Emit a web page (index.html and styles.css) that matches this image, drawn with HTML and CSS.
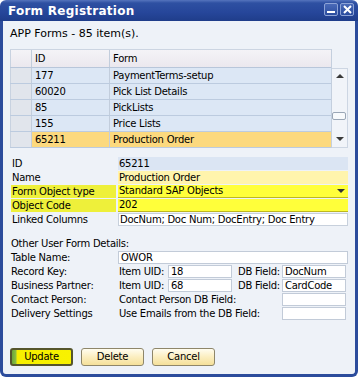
FILE: index.html
```html
<!DOCTYPE html>
<html>
<head>
<meta charset="utf-8">
<link rel="stylesheet" href="styles.css">
</head>
<body>
<div class="win">
  <div class="titlebar">
    <span class="title">Form Registration</span>
    <div class="tbtns">
      <span class="tb tb-min"><span class="minbar"></span></span>
      <span class="tb tb-close">
        <svg width="9" height="9" viewBox="0 0 9 9"><path d="M1 1 L8 8 M8 1 L1 8" stroke="#fff" stroke-width="2"/></svg>
      </span>
    </div>
  </div>
  <div class="body">
    <div class="count">APP Forms - 85 item(s).</div>
    <div class="gridwrap">
      <div class="grid">
        <div class="row head">
          <div class="c rh"></div>
          <div class="c cid">ID</div>
          <div class="c cform">Form</div>
        </div>
        <div class="row">
          <div class="c rh"></div>
          <div class="c cid">177</div>
          <div class="c cform">PaymentTerms-setup</div>
        </div>
        <div class="row">
          <div class="c rh"></div>
          <div class="c cid">60020</div>
          <div class="c cform">Pick List Details</div>
        </div>
        <div class="row">
          <div class="c rh"></div>
          <div class="c cid">85</div>
          <div class="c cform">PickLists</div>
        </div>
        <div class="row">
          <div class="c rh"></div>
          <div class="c cid">155</div>
          <div class="c cform">Price Lists</div>
        </div>
        <div class="row sel">
          <div class="c rh"></div>
          <div class="c cid">65211</div>
          <div class="c cform">Production Order</div>
        </div>
      </div>
      <div class="scroll">
        <span class="arrow up"></span>
        <span class="thumb"></span>
        <span class="arrow down"></span>
      </div>
    </div>

    <div class="details">
      <div class="drow">
        <div class="lbl">ID</div>
        <div class="val v-id">65211</div>
      </div>
      <div class="drow">
        <div class="lbl">Name</div>
        <div class="val v-name">Production Order</div>
      </div>
      <div class="drow">
        <div class="lbl hl">Form Object type</div>
        <div class="val v-yel v-combo">Standard SAP Objects<span class="caret"></span></div>
      </div>
      <div class="drow">
        <div class="lbl hl">Object Code</div>
        <div class="val v-yel">202</div>
      </div>
      <div class="drow">
        <div class="lbl">Linked Columns</div>
        <div class="val v-white">DocNum; Doc Num; DocEntry; Doc Entry</div>
      </div>
    </div>

    <div class="other-title">Other User Form Details:</div>
    <div class="other">
      <div class="orow">
        <div class="lbl">Table Name:</div>
        <div class="box full">OWOR</div>
      </div>
      <div class="orow">
        <div class="lbl">Record Key:</div>
        <div class="txt t-uid">Item UID:</div>
        <div class="box uid">18</div>
        <div class="txt t-db">DB Field:</div>
        <div class="box db">DocNum</div>
      </div>
      <div class="orow">
        <div class="lbl">Business Partner:</div>
        <div class="txt t-uid">Item UID:</div>
        <div class="box uid">68</div>
        <div class="txt t-db">DB Field:</div>
        <div class="box db">CardCode</div>
      </div>
      <div class="orow">
        <div class="lbl">Contact Person:</div>
        <div class="txt t-long">Contact Person DB Field:</div>
        <div class="box db"></div>
      </div>
      <div class="orow">
        <div class="lbl">Delivery Settings</div>
        <div class="txt t-long">Use Emails from the DB Field:</div>
        <div class="box db"></div>
      </div>
    </div>

    <div class="buttons">
      <div class="btn btn-primary">Update</div>
      <div class="btn">Delete</div>
      <div class="btn">Cancel</div>
    </div>
  </div>
</div>
</body>
</html>
```

FILE: styles.css
```css
* { box-sizing: border-box; }
html, body { margin: 0; padding: 0; background: #ffffff; }
body {
  font-family: "DejaVu Sans", Verdana, sans-serif;
  font-size: 10px;
  letter-spacing: -0.25px;
  color: #000;
}
.win {
  width: 358px;
  height: 377px;
  display: flex;
  flex-direction: column;
}
.titlebar {
  height: 21px;
  flex: none;
  background: linear-gradient(#5574bd 0, #2e50a2 3px, #26469a 60%, #1f3d8a 100%);
  border-radius: 6px 6px 0 0;
  display: flex;
  align-items: center;
  justify-content: space-between;
  padding: 0 4px 0 8px;
}
.title {
  color: #fff;
  font-weight: bold;
  font-size: 12px;
  letter-spacing: 0.25px;
}
.tbtns { display: flex; gap: 2px; margin-top: -3px; }
.tb {
  width: 14px;
  height: 13px;
  border: 1px solid #8da3d6;
  border-radius: 2px;
  background: linear-gradient(#4a6ab8, #2a4c9e);
  display: flex;
  align-items: center;
  justify-content: center;
  position: relative;
}
.minbar {
  position: absolute;
  left: 2px;
  right: 2px;
  bottom: 2px;
  height: 2px;
  background: #fff;
}
.body {
  flex: 1;
  background: #eef2f8;
  border-left: 3px solid #2c4c9c;
  border-right: 3px solid #2c4c9c;
  border-bottom: 3px solid #2c4c9c;
  border-radius: 0 0 6px 6px;
  padding: 0 7px;
  display: flex;
  flex-direction: column;
}
.count {
  margin-top: 6px;
  height: 14px;
  line-height: 14px;
  font-size: 11px;
  letter-spacing: 0;
}
.gridwrap {
  margin-top: 8px;
  display: flex;
  align-items: flex-start;
}
.grid {
  width: 322px;
  border-right: 1px solid #c4cfde;
}
.row {
  display: flex;
  height: 16px;
  border-bottom: 1px solid #bccbdf;
  background: #dce7f5;
}
.row.head {
  height: 19px;
  border-top: 1px solid #ccd5e2;
  background: linear-gradient(#f4f3f7, #ebe8ee);
  border-bottom: 1px solid #b8c6da;
}
.c {
  line-height: 15px;
  white-space: nowrap;
  overflow: hidden;
}
.head .c { line-height: 17px; }
.rh {
  width: 22px;
  background: #e1e5ec;
  border-right: 1px solid #c2cddc;
  border-left: 1px solid #c8d2e0;
}
.head .rh { background: transparent; }
.cid {
  width: 78px;
  padding-left: 3px;
  border-right: 1px solid #c2cddc;
}
.cform {
  flex: 1;
  padding-left: 3px;
}
.row.sel .cid, .row.sel .cform { background: #fcd97e; }

.scroll {
  margin-top: 19px;
  width: 16px;
  height: 80px;
  background: #f1f4f9;
  border: 1px solid #cdd6e3;
  border-left: none;
  position: relative;
}
.arrow {
  position: absolute;
  left: 4px;
  width: 0;
  height: 0;
  border-left: 4px solid transparent;
  border-right: 4px solid transparent;
}
.arrow.up { top: 5px; border-bottom: 4px solid #3a3a3a; }
.arrow.down { bottom: 6px; border-top: 4px solid #3a3a3a; }
.thumb {
  position: absolute;
  left: 0;
  top: 43px;
  width: 14px;
  height: 8px;
  background: #f8fafc;
  border: 1px solid #9aa6b6;
  border-radius: 2px;
}

.details {
  margin-top: 9px;
  display: flex;
  flex-direction: column;
  gap: 1px;
}
.drow {
  display: flex;
  height: 13px;
}
.lbl {
  width: 105px;
  margin-left: 1px;
  padding-left: 1px;
  line-height: 13px;
  white-space: nowrap;
}
.lbl.hl { background: #eef03a; }
.val {
  margin-left: 2px;
  flex: 1;
  line-height: 13px;
  padding-left: 1px;
  white-space: nowrap;
  overflow: hidden;
}
.v-id { background: #dbe5f3; }
.v-name { background: #fff4ac; }
.v-yel { background: #ffff3a; border-bottom: 1px solid #bdb820; line-height: 12px; }
.v-combo { position: relative; }
.caret {
  position: absolute;
  right: 3px;
  top: 4px;
  width: 0;
  height: 0;
  border-left: 4px solid transparent;
  border-right: 4px solid transparent;
  border-top: 4px solid #333;
}
.v-white { background: #fff; border: 1px solid #c7d0dc; line-height: 11px; }

.other-title {
  margin-top: 11px;
  height: 14px;
  line-height: 14px;
  padding-left: 1px;
}
.other {
  display: flex;
  flex-direction: column;
  gap: 1px;
}
.orow {
  display: flex;
  height: 13px;
  align-items: stretch;
}
.orow .lbl { width: 106px; margin-left: 0; }
.txt { line-height: 13px; white-space: nowrap; }
.t-uid { width: 50px; margin-left: 2px; padding-left: 1px; }
.t-db { width: 44px; margin-left: 6px; }
.t-long { width: 164px; margin-left: 2px; padding-left: 1px; }
.box {
  background: #fff;
  border: 1px solid #c2cbd8;
  line-height: 11px;
  padding-left: 2px;
  white-space: nowrap;
}
.box.full { flex: 1; margin-left: 2px; }
.box.uid { width: 64px; }
.box.db { width: 64px; }

.buttons {
  margin-top: 28px;
  display: flex;
  gap: 8px;
}
.btn {
  width: 63px;
  height: 18px;
  border: 1px solid #8e866a;
  border-radius: 3px;
  background: linear-gradient(#fffdf0, #fbeec0 50%, #f5e09a);
  text-align: center;
  line-height: 16px;
}
.btn-primary {
  border: 2px solid #55552c;
  background: linear-gradient(90deg, #6aa63a 0, #8cc040 4px, #f6ef00 5px, #f8f200 100%);
  line-height: 14px;
}
```
